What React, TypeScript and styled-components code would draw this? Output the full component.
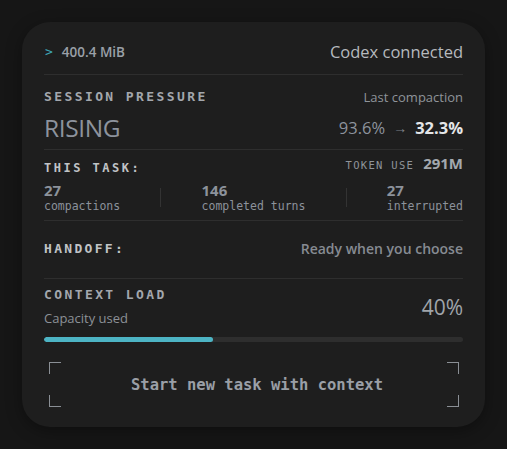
import React from "react";
import styled, { createGlobalStyle } from "styled-components";

const GlobalStyle = createGlobalStyle`
  html, body { margin: 0; padding: 0; background: #161616; }
  body {
    font-family: "Open Sans", "Noto Sans", sans-serif;
    -webkit-font-smoothing: antialiased;
  }
`;

const MONO = `"DejaVu Sans Mono", "Liberation Mono", monospace`;

const Page = styled.div`
  width: 507px;
  box-sizing: border-box;
  padding: 22px;
`;

const Card = styled.section`
  width: 463px;
  box-sizing: border-box;
  background: #1e1e1e;
  border-radius: 28px;
  padding: 0 22px 20px;
  box-shadow: 0 4px 16px rgba(0, 0, 0, 0.35);
`;

const Section = styled.div<{ $pad: string; $divider?: boolean }>`
  padding: ${(p) => p.$pad};
  border-bottom: ${(p) => (p.$divider ? "1px solid #2e2e2e" : "none")};
`;

const Row = styled.div<{ $align?: string; $gap?: number }>`
  display: flex;
  justify-content: space-between;
  align-items: ${(p) => p.$align || "center"};
  margin-top: ${(p) => p.$gap || 0}px;
`;

const Memory = styled.div`
  display: flex;
  align-items: center;
  gap: 9px;
  line-height: 22px;
`;

const Prompt = styled.span`
  font-family: ${MONO};
  font-size: 13px;
  color: #3ea6b5;
  padding-left: 1px;
`;

const MemValue = styled.span`
  font-size: 13.5px;
  font-weight: 600;
  color: #9aa0a8;
`;

const Status = styled.span`
  font-size: 16.5px;
  line-height: 22px;
  color: #b6babe;
`;

const Label = styled.div<{ $size?: number; $spacing?: number; $color?: string; $offset?: number }>`
  font-family: ${MONO};
  font-weight: 700;
  font-size: ${(p) => p.$size || 13}px;
  letter-spacing: ${(p) => p.$spacing ?? 2.4}px;
  line-height: 16px;
  margin-top: ${(p) => p.$offset || 0}px;
  color: ${(p) => p.$color || "#a3a7ad"};
  text-transform: uppercase;
`;

const Muted = styled.span`
  font-size: 13px;
  line-height: 16px;
  color: #8f949a;
`;

const Big = styled.div`
  font-size: 24.5px;
  font-weight: 500;
  line-height: 30px;
  color: #8d939d;
  letter-spacing: -0.4px;
`;

const Trend = styled.div`
  font-size: 16.5px;
  line-height: 30px;
  color: #8d939d;
  display: flex;
  align-items: center;
  gap: 8px;
`;

const Arrow = styled.span`
  font-size: 14px;
  color: #7d828a;
`;

const Strong = styled.span`
  font-weight: 700;
  color: #e4e6e8;
`;

const TokenUse = styled.div`
  display: flex;
  align-items: baseline;
  gap: 9px;
  line-height: 18px;
`;

const TokenLabel = styled.span`
  font-family: ${MONO};
  font-size: 10.5px;
  letter-spacing: 1.3px;
  color: #8f949a;
`;

const TokenValue = styled.span`
  font-size: 15px;
  font-weight: 700;
  color: #a3a8ae;
`;

const Stats = styled.div`
  display: flex;
  justify-content: space-between;
  align-items: center;
  margin-top: 5px;
`;

const Stat = styled.div`
  display: flex;
  flex-direction: column;
`;

const StatValue = styled.span`
  font-size: 15px;
  font-weight: 700;
  line-height: 18px;
  color: #8c929b;
`;

const StatLabel = styled.span`
  font-family: ${MONO};
  font-size: 11.5px;
  line-height: 14px;
  color: #8c929b;
`;

const VDivider = styled.div`
  width: 1px;
  height: 19px;
  background: #333333;
`;

const Ready = styled.span`
  font-size: 14px;
  font-weight: 600;
  line-height: 20px;
  color: #868b92;
`;

const LoadInfo = styled.div`
  display: flex;
  flex-direction: column;
  gap: 6px;
`;

const Caption = styled.span`
  font-size: 13px;
  line-height: 18px;
  color: #8c9197;
`;

const Percent = styled.span`
  font-size: 21px;
  font-weight: 500;
  line-height: 26px;
  color: #a0a5ab;
`;

const Track = styled.div`
  margin-top: 10px;
  height: 5px;
  border-radius: 3px;
  background: #2e2e2e;
  overflow: hidden;
`;

const Fill = styled.div`
  height: 100%;
  border-radius: 3px;
  background: #4db4c4;
`;

const Action = styled.button`
  position: relative;
  display: flex;
  align-items: center;
  justify-content: center;
  width: calc(100% - 9px);
  height: 45px;
  margin: 20px 4px 0 5px;
  padding: 0 0 0 6px;
  background: transparent;
  border: none;
  font-family: ${MONO};
  font-weight: 700;
  font-size: 15.5px;
  color: #9a9fa6;
  cursor: pointer;
`;

const Corner = styled.span<{ $v: "top" | "bottom"; $h: "left" | "right" }>`
  position: absolute;
  width: 12px;
  height: 12px;
  ${(p) => p.$v}: 0;
  ${(p) => p.$h}: 0;
  border-${(p) => p.$v}: 1px solid #8a8f95;
  border-${(p) => p.$h}: 1px solid #8a8f95;
  box-sizing: border-box;
`;

export default function App() {
  const load = 40.3;
  return (
    <>
      <GlobalStyle />
      <Page>
        <Card>
          <Section $pad="19px 0 11px" $divider>
            <Row>
              <Memory>
                <Prompt>&gt;</Prompt>
                <MemValue>400.4 MiB</MemValue>
              </Memory>
              <Status>Codex connected</Status>
            </Row>
          </Section>

          <Section $pad="14px 0 6px" $divider>
            <Row>
              <Label>Session Pressure</Label>
              <Muted>Last compaction</Muted>
            </Row>
            <Row $gap={8}>
              <Big>RISING</Big>
              <Trend>
                <span>93.6%</span>
                <Arrow>→</Arrow>
                <Strong>32.3%</Strong>
              </Trend>
            </Row>
          </Section>

          <Section $pad="4px 0 7px" $divider>
            <Row $align="flex-start">
              <Label $size={12} $spacing={2.5} $color="#c0c3c6" $offset={6}>
                This task:
              </Label>
              <TokenUse>
                <TokenLabel>TOKEN USE</TokenLabel>
                <TokenValue>291M</TokenValue>
              </TokenUse>
            </Row>
            <Stats>
              <Stat>
                <StatValue>27</StatValue>
                <StatLabel>compactions</StatLabel>
              </Stat>
              <VDivider />
              <Stat>
                <StatValue>146</StatValue>
                <StatLabel>completed turns</StatLabel>
              </Stat>
              <VDivider />
              <Stat>
                <StatValue>27</StatValue>
                <StatLabel>interrupted</StatLabel>
              </Stat>
            </Stats>
          </Section>

          <Section $pad="18px 0 19px" $divider>
            <Row>
              <Label $color="#c0c3c6" $spacing={2.3}>Handoff:</Label>
              <Ready>Ready when you choose</Ready>
            </Row>
          </Section>

          <Section $pad="8px 0 0">
            <Row>
              <LoadInfo>
                <Label>Context Load</Label>
                <Caption>Capacity used</Caption>
              </LoadInfo>
              <Percent>40%</Percent>
            </Row>
            <Track>
              <Fill style={{ width: `${load}%` }} />
            </Track>
            <Action>
              <Corner $v="top" $h="left" />
              <Corner $v="top" $h="right" />
              <Corner $v="bottom" $h="left" />
              <Corner $v="bottom" $h="right" />
              Start new task with context
            </Action>
          </Section>
        </Card>
      </Page>
    </>
  );
}
